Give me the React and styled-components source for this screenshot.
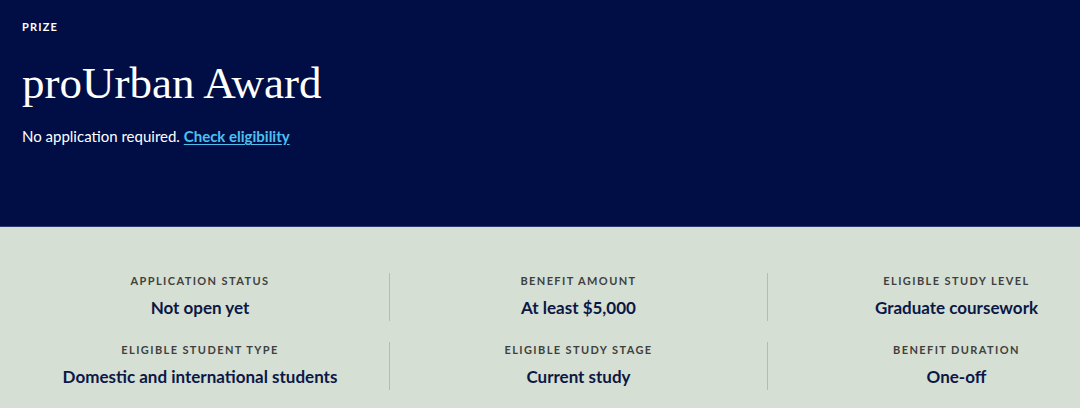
import React from 'react'
import styled, { createGlobalStyle } from 'styled-components'

const GlobalStyle = createGlobalStyle`
  html, body { margin: 0; padding: 0; }
  body {
    width: 1080px;
    height: 408px;
    overflow: hidden;
    font-family: Lato, "Open Sans", sans-serif;
    background: #d5dfd3;
  }
`

const Hero = styled.header`
  background: #000e45;
  color: #ffffff;
  height: 227px;
  box-sizing: border-box;
  padding: 20px 22px 0;
  border-bottom: 1px solid #2a3b6e;
`

const Kicker = styled.div`
  font-size: 11px;
  font-weight: 700;
  letter-spacing: 1.2px;
  text-transform: uppercase;
  line-height: 14px;
`

const Title = styled.h1`
  margin: 25px 0 0;
  font-family: "Liberation Serif", "DejaVu Serif", serif;
  font-weight: 400;
  font-size: 45px;
  line-height: 48px;
`

const Lead = styled.p`
  margin: 19px 0 0;
  font-size: 15px;
  line-height: 20px;
`

const Link = styled.a`
  color: #4ec0f0;
  font-weight: 700;
  text-decoration: underline;
  text-underline-offset: 2px;
`

const Facts = styled.section`
  width: 1080px;
  overflow: hidden;
`

const FactGrid = styled.div`
  display: grid;
  grid-template-columns: repeat(3, 378px);
  row-gap: 21px;
  padding: 46px 0 0 11px;
`

const Fact = styled.div`
  text-align: center;
  height: 48px;
  box-sizing: border-box;
  padding-top: 1px;
  border-left: ${p => (p.$first ? 'none' : '1px solid #b3bdb2')};
`

const Label = styled.div`
  font-size: 11px;
  font-weight: 700;
  letter-spacing: 1.4px;
  text-transform: uppercase;
  color: #3f3f3f;
  line-height: 14px;
`

const Value = styled.div`
  margin-top: 9px;
  font-size: 17px;
  font-weight: 700;
  color: #0b1846;
  line-height: 22px;
`

const facts = [
  ['Application status', 'Not open yet'],
  ['Benefit amount', 'At least $5,000'],
  ['Eligible study level', 'Graduate coursework'],
  ['Eligible student type', 'Domestic and international students'],
  ['Eligible study stage', 'Current study'],
  ['Benefit duration', 'One-off']
]

export default function App () {
  return (
    <>
      <GlobalStyle />
      <Hero>
        <Kicker>Prize</Kicker>
        <Title>proUrban Award</Title>
        <Lead>
          No application required. <Link href="#">Check eligibility</Link>
        </Lead>
      </Hero>
      <Facts>
        <FactGrid>
          {facts.map(([label, value], i) => (
            <Fact key={label} $first={i % 3 === 0}>
              <Label>{label}</Label>
              <Value>{value}</Value>
            </Fact>
          ))}
        </FactGrid>
      </Facts>
    </>
  )
}
